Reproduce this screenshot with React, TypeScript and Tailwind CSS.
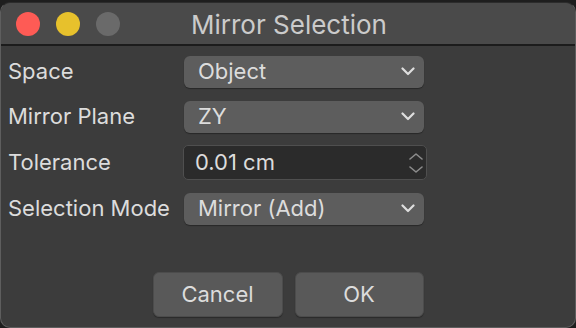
import React from "react";

const Chevron = () => (
  <svg width="14" height="9" viewBox="0 0 14 9" fill="none">
    <polyline points="1.5,1.5 7,7 12.5,1.5" stroke="#dedede" strokeWidth="2.2" strokeLinecap="round" strokeLinejoin="round" />
  </svg>
);

const Stepper = () => (
  <div className="flex flex-col gap-[6px]">
    <svg width="14" height="7" viewBox="0 0 14 7" fill="none">
      <polyline points="1,6 7,1 13,6" stroke="#8c8c8c" strokeWidth="1.6" strokeLinecap="round" strokeLinejoin="round" />
    </svg>
    <svg width="14" height="7" viewBox="0 0 14 7" fill="none">
      <polyline points="1,1 7,6 13,1" stroke="#8c8c8c" strokeWidth="1.6" strokeLinecap="round" strokeLinejoin="round" />
    </svg>
  </div>
);

interface SelectProps {
  value: string;
}

const Select = ({ value }: SelectProps) => (
  <div className="w-[240px] h-[32px] rounded-[6px] bg-[#5d5d5d] shadow-[0_1px_1px_rgba(0,0,0,0.35)] flex items-center justify-between pl-[14px] pr-[9px]">
    <span>{value}</span>
    <Chevron />
  </div>
);

const Row = ({ label, children }: { label: string; children: React.ReactNode }) => (
  <div className="flex items-center">
    <div className="w-[183px] pl-[7px]">{label}</div>
    {children}
  </div>
);

const App = () => {
  return (
    <div
      className="w-[576px] h-[328px] bg-[#1e1e1e] pt-[2px] text-[#dcdcdc]"
      style={{ fontFamily: "Inter, 'Liberation Sans', sans-serif" }}
    >
      <div className="h-[326px] rounded-[10px] border border-[#5e5e5e] border-t-[#2c2c2c] bg-[#3c3c3c] overflow-hidden flex flex-col">
        <div className="h-[43px] bg-[#4a4a4a] border-b-2 border-[#1c1c1c] flex items-center relative px-[15px] gap-[16px]">
          <div className="w-[24px] h-[24px] rounded-full bg-[#fe5b55]" />
          <div className="w-[24px] h-[24px] rounded-full bg-[#e7c12c]" />
          <div className="w-[24px] h-[24px] rounded-full bg-[#6a6a6a]" />
          <div className="absolute inset-0 flex items-center justify-center text-[26px] text-[#cbcbcb] pl-[2px] pt-[2px]">
            Mirror Selection
          </div>
        </div>

        <div className="flex-1 flex flex-col text-[22px] pt-[9px]">
          <div className="flex flex-col gap-[12px]">
            <Row label="Space">
              <Select value="Object" />
            </Row>
            <Row label="Mirror Plane">
              <Select value="ZY" />
            </Row>
            <Row label="Tolerance">
              <div className="-ml-[1px] w-[244px] h-[35px] rounded-[5px] bg-[#2b2b2b] border border-[#4f4f4f] flex items-center justify-between pl-[11px] pr-[3px]">
                <span>0.01 cm</span>
                <Stepper />
              </div>
            </Row>
            <Row label="Selection Mode">
              <Select value="Mirror (Add)" />
            </Row>
          </div>

          <div className="flex justify-center gap-[12px] mt-[47px]">
            <button className="w-[130px] h-[45px] rounded-[6px] bg-[#595959] border border-[#4c4c4c] shadow-[0_1px_1px_rgba(0,0,0,0.3)] text-[#dcdcdc]">
              Cancel
            </button>
            <button className="w-[129px] h-[45px] rounded-[6px] bg-[#595959] border border-[#4c4c4c] shadow-[0_1px_1px_rgba(0,0,0,0.3)] text-[#dcdcdc]">
              OK
            </button>
          </div>
        </div>
      </div>
    </div>
  );
};

export default App;
